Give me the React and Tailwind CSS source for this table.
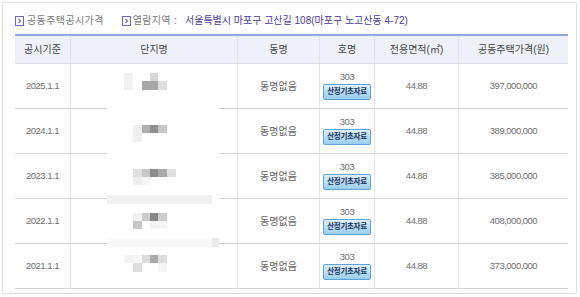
import React from "react";

const rows = [
  {
    date: "2025.1.1",
    price: "397,000,000",
    blur: [
      [53, 9, 9, 17, "#f2f2f2"],
      [79, 9, 8, 8, "#d8d8d8"],
      [71, 17, 16, 9, "#a8a8a8"],
      [87, 17, 9, 9, "#e0e0e0"],
    ],
    gap: true,
  },
  {
    date: "2024.1.1",
    price: "389,000,000",
    blur: [
      [62, 16, 9, 17, "#f0f0f0"],
      [71, 16, 8, 8, "#b0b0b0"],
      [79, 16, 8, 8, "#909090"],
      [87, 16, 9, 8, "#c8c8c8"],
    ],
    gap: true,
  },
  {
    date: "2023.1.1",
    price: "385,000,000",
    blur: [
      [62, 15, 9, 8, "#e0e0e0"],
      [71, 15, 8, 8, "#c8c8c8"],
      [79, 15, 8, 8, "#8a8a8a"],
      [87, 15, 9, 8, "#aaaaaa"],
      [96, 15, 9, 8, "#e0e0e0"],
      [62, 23, 9, 8, "#eeeeee"],
      [71, 23, 8, 8, "#f6f6f6"],
      [36, 41, 105, 4, "#f0f0f0"],
    ],
    gap: true,
  },
  {
    date: "2022.1.1",
    price: "408,000,000",
    blur: [
      [36, 0, 105, 5, "#f0f0f0"],
      [62, 14, 9, 8, "#f3f3f3"],
      [71, 14, 8, 8, "#cccccc"],
      [79, 14, 8, 8, "#888888"],
      [87, 14, 9, 8, "#cccccc"],
      [62, 22, 9, 8, "#c8c8c8"],
      [79, 22, 17, 8, "#f5f5f5"],
      [36, 39, 105, 6, "#f8f8f8"],
      [141, 39, 7, 6, "#ebebeb"],
    ],
    gap: true,
  },
  {
    date: "2021.1.1",
    price: "373,000,000",
    blur: [
      [36, 0, 105, 3, "#f8f8f8"],
      [141, 0, 7, 3, "#ebebeb"],
      [54, 11, 8, 8, "#f3f3f3"],
      [62, 11, 9, 8, "#f6f6f6"],
      [71, 11, 8, 8, "#dddddd"],
      [79, 11, 8, 8, "#aaaaaa"],
      [87, 11, 9, 8, "#dddddd"],
      [62, 19, 9, 9, "#dddddd"],
      [87, 19, 9, 9, "#f5f5f5"],
    ],
    gap: false,
  },
];

const cols = "grid grid-cols-[55px_167px_82px_55px_84px_110px]";
const kr = "font-['Liberation_Sans','Noto_Sans_CJK_KR',sans-serif]";
const num = "font-['Liberation_Sans',sans-serif] text-[9.5px] tracking-[-0.5px] text-[#707070]";

function ArrowBox() {
  return (
    <svg width="9" height="10" viewBox="0 0 9 10" className="shrink-0">
      <rect x="0.5" y="0.5" width="8" height="9" fill="#fff" stroke="#6d64c8" />
      <path d="M3.5 3 L5.5 5 L3.5 7" fill="none" stroke="#6d64c8" strokeWidth="1.1" />
    </svg>
  );
}

function BlurName({ blur, gap }) {
  return (
    <svg width="166" height="45" viewBox="0 0 166 45" className="block">
      {blur.map(([x, y, w, h, c], i) => (
        <rect key={i} x={x} y={y} width={w} height={h} fill={c} />
      ))}
      {gap ? (
        <>
          <rect x="0" y="44" width="36" height="1" fill="#d4d4d4" />
          <rect x="148" y="44" width="18" height="1" fill="#d4d4d4" />
        </>
      ) : (
        <rect x="0" y="44" width="166" height="1" fill="#d4d4d4" />
      )}
    </svg>
  );
}

function Row({ row }) {
  const cell = "border-b border-[#d4d4d4] flex items-center justify-center";
  const sep = "border-l border-l-[#e1e7ee]";
  return (
    <div className={`${cols} h-[45px]`}>
      <div className={`${cell} ${num}`}>{row.date}</div>
      <div className={`${sep} h-[45px]`}>
        <BlurName blur={row.blur} gap={row.gap} />
      </div>
      <div className={`${cell} ${sep} text-[10px] text-[#666] ${kr}`}>동명없음</div>
      <div className={`${cell} ${sep} flex-col gap-[1px] pb-[2px]`}>
        <span className={`${num} leading-[12px]`}>303</span>
        <span
          className={`${kr} h-[16px] w-[48px] flex items-center justify-center rounded-[2px] border border-[#5fa3d4] bg-gradient-to-b from-[#dff0fb] to-[#98cdee] text-[7.5px] font-bold tracking-[-0.3px] text-[#17325e]`}
        >
          산정기초자료
        </span>
      </div>
      <div className={`${cell} ${sep} ${num}`}>44.88</div>
      <div className={`${cell} ${sep} ${num}`}>{row.price}</div>
    </div>
  );
}

export default function App() {
  const head = "flex items-center justify-center border-b border-[#d9e1ea] text-[10px] text-[#444]";
  const hsep = "border-l border-l-[#dde5ee]";
  return (
    <div className="w-[580px] h-[297px] bg-white pl-[2px] pt-[2px]">
      <div className="w-[575px] h-[292px] border border-[#e0e0e0] pl-[12px] pt-[9px]">
        <div className={`h-[17px] flex items-center text-[10px] ${kr}`}>
          <ArrowBox />
          <span className="ml-[3px] tracking-[0.4px] text-[#7a7a7a]">공동주택공시가격</span>
          <span className="ml-[18px]">
            <ArrowBox />
          </span>
          <span className="ml-[2px] tracking-[0.3px] text-[#7a7a7a]">열람지역 :</span>
          <span className="ml-[8px] text-[#4a3d9c]">서울특별시 마포구 고산길 108(마포구 노고산동 4-72)</span>
        </div>
        <div className="mt-[5px] w-[553px]">
          <div className={`${cols} h-[30px] border-t-2 border-[#8ea9e3] bg-[#eef2f8] ${kr}`}>
            <div className={head}>공시기준</div>
            <div className={`${head} ${hsep}`}>단지명</div>
            <div className={`${head} ${hsep}`}>동명</div>
            <div className={`${head} ${hsep}`}>호명</div>
            <div className={`${head} ${hsep}`}>전용면적(㎡)</div>
            <div className={`${head} ${hsep}`}>공동주택가격(원)</div>
          </div>
          {rows.map((r) => (
            <Row key={r.date} row={r} />
          ))}
        </div>
      </div>
    </div>
  );
}
